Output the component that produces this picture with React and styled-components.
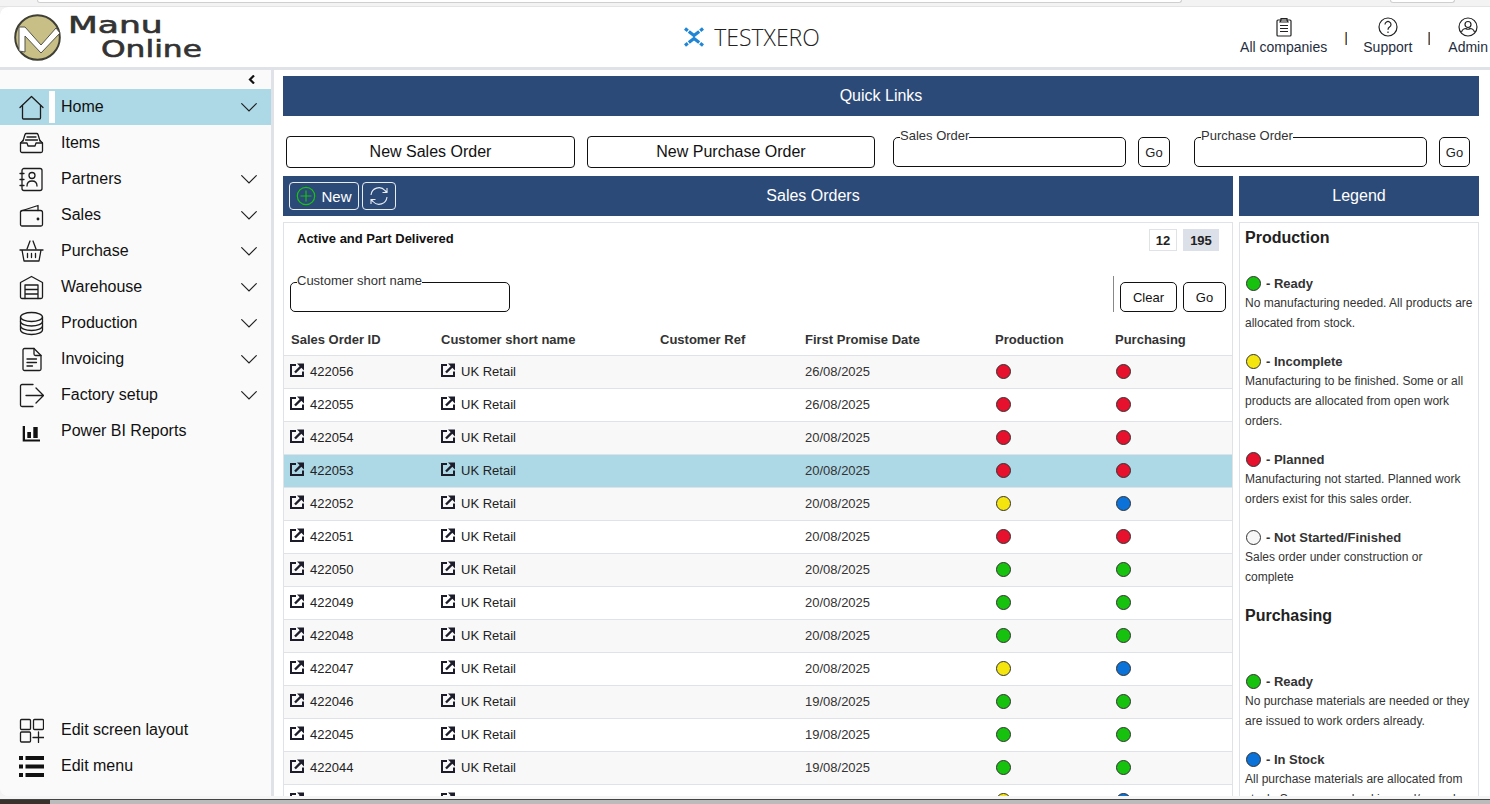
import React from "react";
import styled, { createGlobalStyle } from "styled-components";

const Global = createGlobalStyle`
  html, body { margin: 0; padding: 0; background: #f3f3f3; }
  * { box-sizing: border-box; }
  body { font-family: "Liberation Sans", Arial, sans-serif; color: #212529; }
`;

const Frame = styled.div`
  width: 1490px; height: 804px; overflow: hidden;
  display: flex; flex-direction: column; background: #f3f3f3;
`;
const BrowserStrip = styled.div`
  height: 7px; flex: none; background: #f3f3f3; border-bottom: 1px solid #e4e4e4;
  display: flex; align-items: flex-start; padding-left: 37px;
`;
const AddressPill = styled.div`
  height: 3px; width: ${p => p.$w}px; margin-right: ${p => p.$gap}px; background: #fff; border: 1px solid #cfcfcf; border-top: 0;
  border-radius: 0 0 10px 10px; flex: none;
`;
const Window = styled.div`
  flex: 1; min-height: 0; display: flex; flex-direction: column;
  background: #dfe3e8; border-radius: 8px 0 0 8px; overflow: hidden;
`;
const Header = styled.header`
  height: 60px; flex: none; background: #fff; display: grid;
  grid-template-columns: 1fr auto 1fr; align-items: stretch; margin-bottom: 3px;
`;
const LogoWrap = styled.div`display: flex; align-items: flex-start; padding: 7px 0 0 14px;`;
const LogoText = styled.div`
  font-family: "DejaVu Sans", sans-serif; color: #333; font-weight: 400;
  margin: -1px 0 0 7px; display: flex; flex-direction: column;
`;
const LogoWord = styled.span`
  display: inline-block; font-size: 23px; line-height: 24px;
  margin-left: ${p => p.$left}px; -webkit-text-stroke: 0.6px #333;
  transform: scaleX(${p => p.$sx}); transform-origin: left center; white-space: nowrap;
`;
const Brand = styled.div`
  display: flex; align-items: center; gap: 10px; padding-left: 14px;
  font-family: "Open Sans", sans-serif; font-size: 23px; font-weight: 300; color: #222;
`;
const HeaderLinks = styled.nav`display: flex; justify-content: flex-end; align-items: flex-start; padding-top: 10px; margin-right: 2px;`;
const HeaderLink = styled.div`
  display: flex; flex-direction: column; align-items: center;
  font-size: 14px; line-height: 20px; color: #1f2d3d;
`;
const HeaderDivider = styled.span`
  width: 2px; height: 13px; background: #2f5f9e; margin: 15px ${p => p.$r}px 0 ${p => p.$l}px;
  border-left: 1px solid #d98a3a;
`;
const Body = styled.div`flex: 1; min-height: 0; display: flex; background: #fff;`;
const Sidebar = styled.aside`
  width: 274px; flex: none; background: #fafafa; border-right: 3px solid #dfe3e8;
  display: flex; flex-direction: column; justify-content: space-between; padding-bottom: 12px;
`;
const CollapseRow = styled.div`height: 19px; display: flex; justify-content: flex-end; align-items: center; padding-right: 15px;`;
const NavList = styled.div`display: flex; flex-direction: column;`;
const NavItem = styled.div`
  height: 36px; display: flex; align-items: center;
  padding: 0 14px 0 19px; background: ${p => (p.$active ? "#add8e6" : "transparent")};
  font-size: 16px; color: #111;
`;
const NavIcon = styled.span`width: 25px; height: 25px; display: flex; align-items: center; justify-content: center; flex: none;`;
const NavMarker = styled.span`width: 6px; height: 32px; background: ${p => (p.$active ? "#fff" : "transparent")}; margin: 0 6px 0 5px; flex: none;`;
const NavLabel = styled.span`flex: 1;`;
const Main = styled.main`flex: 1; min-width: 0; display: flex; flex-direction: column; padding: 6px 11px 0 9px;`;
const Bar = styled.div`
  height: 40px; flex: none; background: #2c4a78; color: #fff; font-size: 16px;
  display: flex; align-items: center; justify-content: center;
`;
const BarTitle = styled.span`flex: 1; text-align: center; padding-right: 3px;`;
const QuickRow = styled.div`
  height: 40px; flex: none; margin: 12px 0 8px; padding: 0 0 0 3px; display: flex; align-items: flex-end;
`;
const OutlineButton = styled.button`
  height: 32px; width: ${p => p.$w}px; margin-right: ${p => p.$gap}px; background: #fff; border: 1px solid #111;
  border-radius: 4px; font: 16px "Liberation Sans", sans-serif; color: #111; padding: 0;
`;
const GoButton = styled.button`
  width: ${p => p.$w}px; height: 30px; margin: 0 ${p => p.$gap}px 1px 12px; background: #fff;
  border: 1px solid #111; border-radius: 5px; font: 13px "Liberation Sans", sans-serif; color: #222; padding: 0; flex: none;
`;
const FloatField = styled.fieldset`
  width: ${p => p.$w}px; height: 37px; margin: 0 0 ${p => p.$mb}px; padding: 0; flex: none;
  border: 1px solid #111; border-radius: 5px; min-width: 0;
`;
const FloatLegend = styled.legend`
  font-size: 13px; line-height: 15px; color: #333; padding: 0; margin-left: 6px; transform: translateY(-2px);
`;
const Columns = styled.div`flex: 1; min-height: 0; display: grid; grid-template-columns: 950px 240px; gap: 6px;`;
const Column = styled.section`display: flex; flex-direction: column; min-height: 0;`;
const BarTools = styled.div`display: flex; gap: 3px; padding-left: 6px;`;
const ToolButton = styled.button`
  height: 28px; width: ${p => p.$w}px; background: transparent; border: 1px solid #e8edf3; border-radius: 4px;
  color: #fff; font: 15px "Liberation Sans", sans-serif; display: flex; align-items: center; justify-content: center; gap: 5px; padding: 0;
`;
const Card = styled.div`
  flex: 1; min-height: 0; overflow: hidden; margin-top: 6px; background: #fff; border: 1px solid #dfe3e8; border-bottom: 0;
`;
const CardTop = styled.div`display: flex; justify-content: space-between; padding: 6px 13px 0 13px;`;
const CardTitle = styled.div`font-size: 13px; font-weight: 700; color: #111; line-height: 19px;`;
const Badges = styled.div`display: flex; gap: 6px;`;
const Badge = styled.span`
  height: 22px; width: ${p => p.$w}px; display: flex; align-items: center; justify-content: center;
  font-size: 13px; font-weight: 700; color: #222; background: ${p => (p.$on ? "#dce0e8" : "#fff")};
  border: 1px solid ${p => (p.$on ? "#dce0e8" : "#dfe3e8")};
`;
const FilterRow = styled.div`display: flex; justify-content: space-between; align-items: flex-end; margin-top: 24px; padding: 0 6px;`;
const FilterActions = styled.div`display: flex; align-items: flex-end; gap: 6px;`;
const FilterDivider = styled.span`width: 1px; height: 36px; background: #888;`;
const FilterButton = styled.button`
  height: 30px; width: ${p => p.$w}px; background: #fff; border: 1px solid #111; border-radius: 5px;
  font: 13px "Liberation Sans", sans-serif; color: #111; padding: 0;
`;
const Table = styled.table`width: 948px; margin-top: 11px; border-collapse: collapse; table-layout: fixed;`;
const Th = styled.th`
  height: 32px; padding: 1px 0 0 7px; text-align: left; font-weight: 700; color: #333; font-size: 13px;
  width: ${p => p.$w}px;
`;
const HeadRow = styled.tr`border-bottom: 1px solid #dfe3e8;`;
const Tr = styled.tr`
  height: 33px; border-bottom: 1px solid #dfe3e8;
  background: ${p => (p.$sel ? "#add8e6" : p.$odd ? "#f8f8f8" : "#fff")};
`;
const Td = styled.td`padding: 0 0 0 ${p => p.$pad ?? 7}px; color: #333; font-size: 13px; vertical-align: middle; white-space: nowrap;`;
const LinkCell = styled.span`display: inline-flex; align-items: center; gap: 6px; color: #222; padding-top: 1px;`;
const Dot = styled.span`
  display: inline-block; width: 15px; height: 15px; border-radius: 50%; border: 1px solid #333;
  background: ${p => p.$c}; vertical-align: middle; margin-left: 1px;
`;
const TableDot = styled(Dot)`margin-bottom: 1px;`;
const LegendBody = styled.div`padding: 6px 5px 0;`;
const LegendHeading = styled.h3`font-size: 16px; line-height: 18px; font-weight: 700; color: #222; margin: ${p => p.$mt}px 0 ${p => p.$mb}px;`;
const LegendEntry = styled.div`margin-bottom: 18px;`;
const LegendName = styled.div`
  display: flex; align-items: center; gap: 5px; font-size: 13px; font-weight: 700; color: #333; height: 20px;
`;
const LegendText = styled.p`margin: 0; font-size: 12px; line-height: 20px; color: #333;`;
const BottomEdge = styled.div`
  height: 8px; flex: none; background: linear-gradient(#f5f5f5 0 3px, #444 3px 4px, #bbb 4px); position: relative;
`;
const TaskThumb = styled.span`position: absolute; left: 0; bottom: 0; width: 50px; height: 4px; background: #38302a;`;

const S = { fill: "none", stroke: "#1c1c1c", strokeWidth: 1.3, strokeLinecap: "round", strokeLinejoin: "round" };
const Svg = ({ children }) => (
  <svg width="25" height="25" viewBox="0 0 25 25" {...S}>{children}</svg>
);
const icons = {
  home: <Svg><path d="M1 12.500 12.500 1.500 24 12.500" /><path d="M3.500 10.500V23a1 1 0 0 0 1 1h16a1 1 0 0 0 1-1V10.500" /></Svg>,
  items: <Svg><path d="M4 10 6 3.500a1.500 1.500 0 0 1 1.500-1h10a1.500 1.500 0 0 1 1.500 1L21 10" /><path d="M8 6h9M6.500 9h12" /><path d="M1.500 12 4 9.500M23.500 12 21 9.500" /><path d="M1.500 12h6.500l1 3h7l1-3h6.500v8a1.500 1.500 0 0 1-1.500 1.500H3A1.500 1.500 0 0 1 1.500 20Z" /></Svg>,
  partners: <Svg><rect x="3" y="1.500" width="20" height="22" rx="2" /><circle cx="13" cy="8.500" r="3" /><path d="M8 19c0-3 2-5 5-5s5 2 5 5" /><path d="M1 6.500h4M1 12.500h4M1 18.500h4" /></Svg>,
  sales: <Svg><path d="M2 8 19 2.500v5" /><path d="M1.500 10a2 2 0 0 1 2-2.500h18a2 2 0 0 1 2 2v12a1.500 1.500 0 0 1-1.500 1.500H3a1.500 1.500 0 0 1-1.500-1.500Z" /><circle cx="19" cy="16" r=".8" fill="#222" /></Svg>,
  purchase: <Svg><path d="M1 11h23M3 11l2 11h15l2-11" /><path d="M8 10 11 2M17 10 14 2" /><path d="M8.500 14.500v4M12.500 14.500v4M16.500 14.500v4" /></Svg>,
  warehouse: <Svg><path d="M1.500 7.500 12.500 1.500 23.500 7.500V22a1.500 1.500 0 0 1-1.500 1.500H3A1.500 1.500 0 0 1 1.500 22Z" /><path d="M6 23.500V10h13v13.500M6 14.500h13M6 19h13" /></Svg>,
  production: <Svg><ellipse cx="12.500" cy="6" rx="11" ry="4.500" /><path d="M1.500 6v13c0 2.500 5 4.500 11 4.500s11-2 11-4.500V6" /><path d="M1.500 10.500c0 2.500 5 4.500 11 4.500s11-2 11-4.500M1.500 15c0 2.500 5 4.500 11 4.500s11-2 11-4.500" /></Svg>,
  invoicing: <Svg><path d="M4 3a1.500 1.500 0 0 1 1.500-1.500h9.500L22 8.500V22a1.500 1.500 0 0 1-1.500 1.500h-15A1.500 1.500 0 0 1 4 22Z" /><path d="M15 1.500V7a1.500 1.500 0 0 0 1.500 1.500H22" /><path d="M8 12h9.500M8 15.500h9.500M8 19h5.500" /></Svg>,
  factory: <Svg><path d="M14 1.500H3A1.500 1.500 0 0 0 1.500 3v19A1.500 1.500 0 0 0 3 23.500h11" /><path d="M7 12.500h17M17 5l7.500 7.500L17 20" /></Svg>,
  powerbi: (
    <svg width="25" height="25" viewBox="0 0 25 25" fill="#111"><path d="M3.700 7H6v13.400h15v2.200H3.700Z" /><rect x="8.300" y="13" width="3.700" height="6" /><rect x="14.300" y="8" width="4.400" height="11" /></svg>
  ),
  layout: <Svg><rect x="1.500" y="1.500" width="10" height="10" rx="1" /><rect x="14.500" y="1.500" width="10" height="10" rx="1" /><rect x="1.500" y="14" width="10" height="10" rx="1" /><path d="M19.500 14v10.500M14 19.500h11" /></Svg>,
  menu: (
    <svg width="25" height="25" viewBox="0 0 25 25" fill="#111"><rect y="2" width="4" height="4" /><rect x="6.500" y="2" width="18.500" height="4" /><rect y="10.500" width="4" height="4" /><rect x="6.500" y="10.500" width="18.500" height="4" /><rect y="19" width="4" height="4" /><rect x="6.500" y="19" width="18.500" height="4" /></svg>
  ),
};
const Chevron = () => (
  <svg width="16" height="9" viewBox="0 0 16 9" fill="none" stroke="#222" strokeWidth="1.2" strokeLinecap="round"><path d="M.7.7 8 8 15.300.7" /></svg>
);
const External = () => (
  <svg width="14" height="14" viewBox="0 0 14 14" fill="none" style={{ flex: "none", marginTop: -2 }}>
    <path d="M6 2H1v11h12V8.500" stroke="#1c1c2a" strokeWidth="2" />
    <path d="M5 9.500 11 3.500" stroke="#1c1c2a" strokeWidth="2.400" /><path d="M7 .5h7v7Z" fill="#1c1c2a" />
  </svg>
);

const topNav = [
  ["home", "Home", true], ["items", "Items", false], ["partners", "Partners", true], ["sales", "Sales", true],
  ["purchase", "Purchase", true], ["warehouse", "Warehouse", true], ["production", "Production", true],
  ["invoicing", "Invoicing", true], ["factory", "Factory setup", true], ["powerbi", "Power BI Reports", false],
];
const R = "#e8112d", Y = "#f5e50f", G = "#17c20e", B = "#0a72d8", W = "#f7f7f7";
const rows = [
  ["422056", "26/08/2025", R, R], ["422055", "26/08/2025", R, R], ["422054", "20/08/2025", R, R],
  ["422053", "20/08/2025", R, R], ["422052", "20/08/2025", Y, B], ["422051", "20/08/2025", R, R],
  ["422050", "20/08/2025", G, G], ["422049", "20/08/2025", G, G], ["422048", "20/08/2025", G, G],
  ["422047", "20/08/2025", Y, B], ["422046", "19/08/2025", G, G], ["422045", "19/08/2025", G, G],
  ["422044", "19/08/2025", G, G], ["422043", "18/08/2025", Y, B],
];
const production = [
  [G, "Ready", "No manufacturing needed. All products are allocated from stock."],
  [Y, "Incomplete", "Manufacturing to be finished. Some or all products are allocated from open work orders."],
  [R, "Planned", "Manufacturing not started. Planned work orders exist for this sales order."],
  [W, "Not Started/Finished", "Sales order under construction or complete"],
];
const purchasing = [
  [G, "Ready", "No purchase materials are needed or they are issued to work orders already."],
  [B, "In Stock", "All purchase materials are allocated from stock. Some are on backing and/or work"],
];
const Entries = ({ list }) => list.map(([c, n, t]) => (
  <LegendEntry key={n}>
    <LegendName><Dot $c={c} /><span>- {n}</span></LegendName>
    <LegendText>{t}</LegendText>
  </LegendEntry>
));

export default function App() {
  return (
    <Frame>
      <Global />
      <BrowserStrip><AddressPill $w={1145} $gap={208} /><AddressPill $w={65} $gap={0} /></BrowserStrip>
      <Window>
        <Header>
          <LogoWrap>
            <svg width="47" height="47" viewBox="0 0 47 47">
              <circle cx="23.500" cy="23.500" r="22.300" fill="#c7bf86" stroke="#3f3f36" strokeWidth="2" />
              <path d="M5 37V13h6l16 18 15-17 4 5-19 20L11 22v16Z" fill="#fff" stroke="#55544a" strokeWidth="1" strokeLinejoin="round" />
            </svg>
            <LogoText>
              <LogoWord $left={0} $sx={1.5}>Manu</LogoWord>
              <LogoWord $left={33} $sx={1.36}>Online</LogoWord>
            </LogoText>
          </LogoWrap>
          <Brand>
            <svg width="20" height="20" viewBox="0 0 20 20" fill="none" stroke="#1f86d6" strokeWidth="3.200">
              <path d="M1 1.500 3.800 3.700M4.800 4.500 10 8.500 15.200 4.500M16.200 3.700 19 1.500" />
              <path d="M1 18.500 3.800 16.300M4.800 15.500 10 11.500 15.200 15.500M16.200 16.300 19 18.500" />
            </svg>
            <span>TESTXERO</span>
          </Brand>
          <HeaderLinks>
            <HeaderLink>
              <svg width="20" height="20" viewBox="0 0 20 20" fill="none" stroke="#222" strokeWidth="1.200">
                <rect x="3" y="3" width="14" height="16" rx="1" /><path d="M7 3V1.500h6V3l1 2H6Z" /><path d="M6 8.500h8M6 11.500h8M6 14.500h8" />
              </svg>
              <span>All companies</span>
            </HeaderLink>
            <HeaderDivider $l={18} $r={16} />
            <HeaderLink>
              <svg width="20" height="20" viewBox="0 0 20 20" fill="none" stroke="#222" strokeWidth="1.200">
                <circle cx="10" cy="10" r="9" /><path d="M7 7.500a3 3 0 1 1 4.500 2.600c-1 .6-1.500 1.200-1.500 2.600" /><path d="M10 14.500v1.500" />
              </svg>
              <span>Support</span>
            </HeaderLink>
            <HeaderDivider $l={16} $r={18} />
            <HeaderLink>
              <svg width="20" height="20" viewBox="0 0 20 20" fill="none" stroke="#222" strokeWidth="1.200">
                <circle cx="10" cy="10" r="9" /><circle cx="10" cy="7.500" r="3" /><path d="M3.500 15c1-3 3-3.500 4.500-3.500 1 1 3 1 4 0 1.500 0 3.500.5 4.500 3.500" />
              </svg>
              <span>Admin</span>
            </HeaderLink>
          </HeaderLinks>
        </Header>
        <Body>
          <Sidebar>
            <div>
              <CollapseRow>
                <svg width="8" height="9" viewBox="0 0 8 9" fill="none" stroke="#111" strokeWidth="2.200"><path d="M6 .5 2 4.500 6 8.500" /></svg>
              </CollapseRow>
              <NavList>
                {topNav.map(([ic, label, more], i) => (
                  <NavItem key={label} $active={i === 0}>
                    <NavIcon>{icons[ic]}</NavIcon>
                    <NavMarker $active={i === 0} />
                    <NavLabel>{label}</NavLabel>
                    {more && <Chevron />}
                  </NavItem>
                ))}
              </NavList>
            </div>
            <NavList>
              {[["layout", "Edit screen layout"], ["menu", "Edit menu"]].map(([ic, label]) => (
                <NavItem key={label}>
                  <NavIcon>{icons[ic]}</NavIcon>
                  <NavMarker />
                  <NavLabel>{label}</NavLabel>
                </NavItem>
              ))}
            </NavList>
          </Sidebar>
          <Main>
            <Bar>Quick Links</Bar>
            <QuickRow>
              <OutlineButton $w={289} $gap={12}>New Sales Order</OutlineButton>
              <OutlineButton $w={288} $gap={18}>New Purchase Order</OutlineButton>
              <FloatField $w={233} $mb={1}><FloatLegend>Sales Order</FloatLegend></FloatField>
              <GoButton $w={32} $gap={24}>Go</GoButton>
              <FloatField $w={233} $mb={1}><FloatLegend>Purchase Order</FloatLegend></FloatField>
              <GoButton $w={31} $gap={0}>Go</GoButton>
            </QuickRow>
            <Columns>
              <Column>
                <Bar>
                  <BarTools>
                    <ToolButton $w={70}>
                      <svg width="20" height="20" viewBox="0 0 20 20" fill="none" stroke="#17c20e" strokeWidth="1.200"><circle cx="10" cy="10" r="8.700" /><path d="M10 4.500v11M4.500 10h11" /></svg>
                      New
                    </ToolButton>
                    <ToolButton $w={34}>
                      <svg width="22" height="22" viewBox="0 0 22 22" fill="none" stroke="#e8edf3" strokeWidth="1.100">
                        <path d="M3 10a8 8 0 0 1 14-4.500L19 7.500M19 3v4.500h-4.500" /><path d="M19 12a8 8 0 0 1-14 4.500L3 14.500M3 19v-4.500h4.500" />
                      </svg>
                    </ToolButton>
                  </BarTools>
                  <BarTitle>Sales Orders</BarTitle>
                </Bar>
                <Card>
                  <CardTop>
                    <CardTitle>Active and Part Delivered</CardTitle>
                    <Badges><Badge $w={28}>12</Badge><Badge $w={36} $on>195</Badge></Badges>
                  </CardTop>
                  <FilterRow>
                    <FloatField $w={220} $mb={0}><FloatLegend>Customer short name</FloatLegend></FloatField>
                    <FilterActions>
                      <FilterDivider />
                      <FilterButton $w={57}>Clear</FilterButton>
                      <FilterButton $w={43}>Go</FilterButton>
                    </FilterActions>
                  </FilterRow>
                  <Table>
                    <thead>
                      <HeadRow>
                        <Th $w={150}>Sales Order ID</Th>
                        <Th $w={219}>Customer short name</Th>
                        <Th $w={145}>Customer Ref</Th>
                        <Th $w={190}>First Promise Date</Th>
                        <Th $w={120}>Production</Th>
                        <Th $w={124}>Purchasing</Th>
                      </HeadRow>
                    </thead>
                    <tbody>
                      {rows.map(([id, date, a, b], i) => (
                        <Tr key={id} $odd={i % 2 === 0} $sel={id === "422053"}>
                          <Td $pad={6}><LinkCell><External />{id}</LinkCell></Td>
                          <Td><LinkCell><External />UK Retail</LinkCell></Td>
                          <Td />
                          <Td>{date}</Td>
                          <Td><TableDot $c={a} /></Td>
                          <Td><TableDot $c={b} /></Td>
                        </Tr>
                      ))}
                    </tbody>
                  </Table>
                </Card>
              </Column>
              <Column>
                <Bar>Legend</Bar>
                <Card>
                  <LegendBody>
                    <LegendHeading $mt={0} $mb={26}>Production</LegendHeading>
                    <Entries list={production} />
                    <LegendHeading $mt={20} $mb={46}>Purchasing</LegendHeading>
                    <Entries list={purchasing} />
                  </LegendBody>
                </Card>
              </Column>
            </Columns>
          </Main>
        </Body>
      </Window>
      <BottomEdge><TaskThumb /></BottomEdge>
    </Frame>
  );
}
